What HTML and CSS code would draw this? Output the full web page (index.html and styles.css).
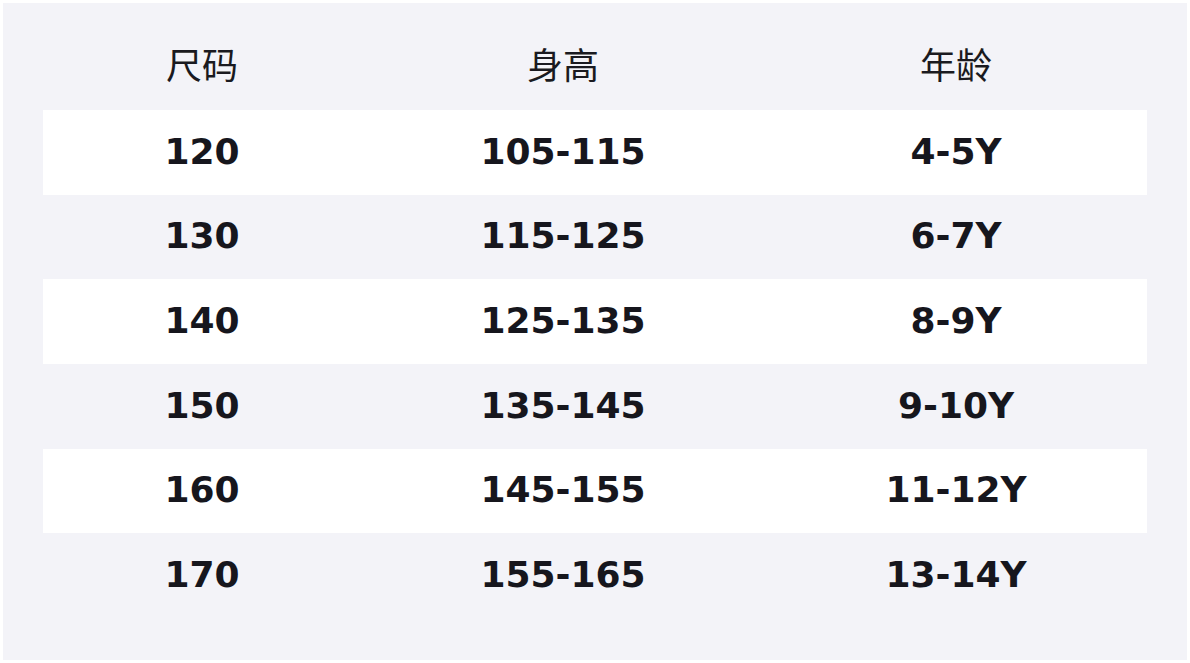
FILE: index.html
```html
<!DOCTYPE html>
<html lang="zh">
<head>
<meta charset="utf-8">
<title>尺码表</title>
<link rel="stylesheet" href="styles.css">
</head>
<body>
<div class="panel">
  <div class="size-table">
    <div class="row head"><div class="cell">尺码</div><div class="cell">身高</div><div class="cell">年龄</div></div>
    <div class="row odd"><div class="cell">120</div><div class="cell">105-115</div><div class="cell">4-5Y</div></div>
    <div class="row"><div class="cell">130</div><div class="cell">115-125</div><div class="cell">6-7Y</div></div>
    <div class="row odd"><div class="cell">140</div><div class="cell">125-135</div><div class="cell">8-9Y</div></div>
    <div class="row"><div class="cell">150</div><div class="cell">135-145</div><div class="cell">9-10Y</div></div>
    <div class="row odd"><div class="cell">160</div><div class="cell">145-155</div><div class="cell">11-12Y</div></div>
    <div class="row"><div class="cell">170</div><div class="cell">155-165</div><div class="cell">13-14Y</div></div>
  </div>
</div>
</body>
</html>
```
FILE: styles.css
```css
html, body {
  margin: 0;
  padding: 0;
  background: #ffffff;
}
body {
  padding: 3px;
  font-family: "DejaVu Sans", "Noto Sans CJK SC", sans-serif;
  color: #16161d;
}
.panel {
  box-sizing: border-box;
  width: 1184px;
  height: 657px;
  background: #f3f3f8;
  padding: 22.3px 40px 42px;
}
.size-table {
  display: flex;
  flex-direction: column;
}
.row {
  display: grid;
  grid-template-columns: 318px 404px 382px;
  height: 84.67px;
  align-items: center;
}
.row.odd {
  background: #ffffff;
}
.cell {
  text-align: center;
  font-size: 36px;
  font-weight: bold;
  line-height: 1;
  padding-bottom: 1px;
}
.head .cell {
  font-family: "Noto Sans CJK SC", sans-serif;
  font-weight: normal;
  font-size: 36px;
  color: #1a1a20;
  padding-bottom: 9px;
}
```
